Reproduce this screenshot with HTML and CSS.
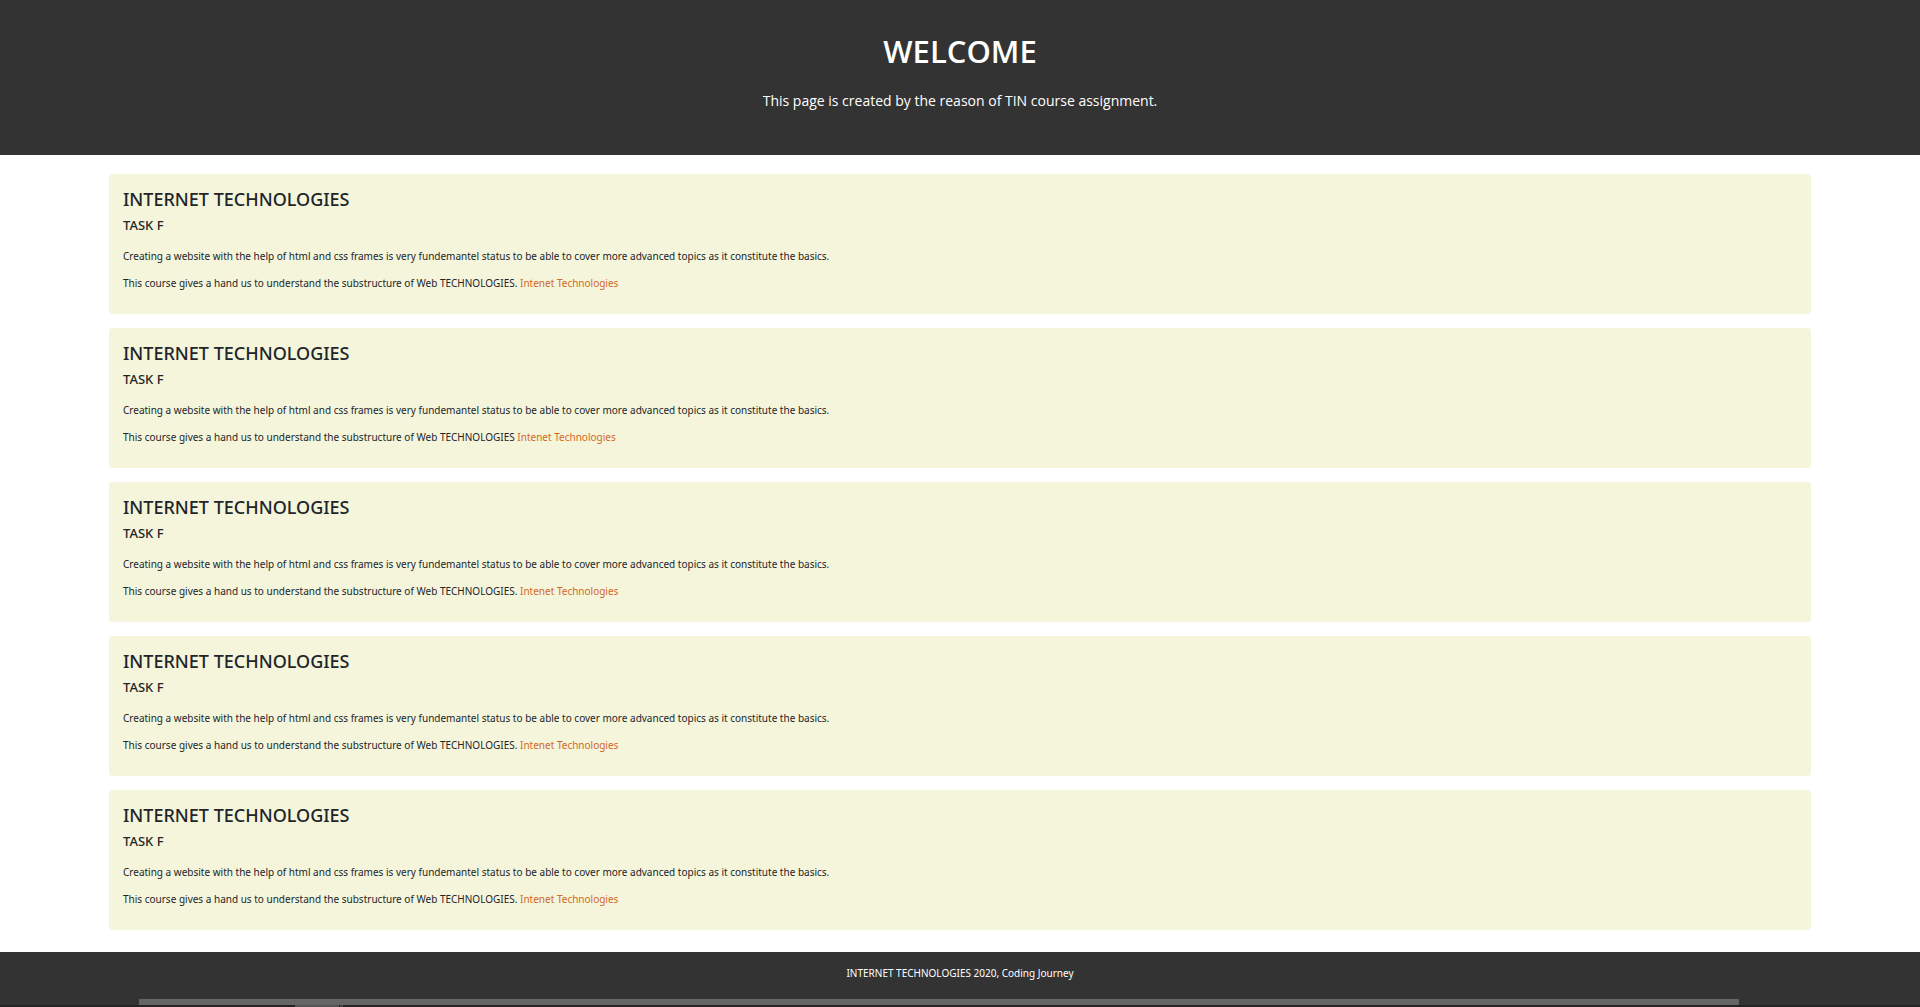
FILE: index.html
```html
<!DOCTYPE html>
<html lang="en">
<head>
  <meta charset="utf-8">
  <title>Internet Technologies</title>
  <link rel="stylesheet" href="styles.css">
</head>
<body>
  <header class="site-header">
    <h1 class="site-title">WELCOME</h1>
    <p class="site-intro">This page is created by the reason of TIN course assignment.</p>
  </header>

  <main class="articles">
    <article class="card">
      <h2 class="card-title">INTERNET TECHNOLOGIES</h2>
      <h3 class="card-subtitle">TASK F</h3>
      <p class="card-text">Creating a website with the help of html and css frames is very fundemantel status to be able to cover more advanced topics as it constitute the basics.</p>
      <p class="card-text">This course gives a hand us to understand the substructure of Web TECHNOLOGIES. <a class="card-link" href="#">Intenet Technologies</a></p>
    </article>
    <article class="card">
      <h2 class="card-title">INTERNET TECHNOLOGIES</h2>
      <h3 class="card-subtitle">TASK F</h3>
      <p class="card-text">Creating a website with the help of html and css frames is very fundemantel status to be able to cover more advanced topics as it constitute the basics.</p>
      <p class="card-text">This course gives a hand us to understand the substructure of Web TECHNOLOGIES <a class="card-link" href="#">Intenet Technologies</a></p>
    </article>
    <article class="card">
      <h2 class="card-title">INTERNET TECHNOLOGIES</h2>
      <h3 class="card-subtitle">TASK F</h3>
      <p class="card-text">Creating a website with the help of html and css frames is very fundemantel status to be able to cover more advanced topics as it constitute the basics.</p>
      <p class="card-text">This course gives a hand us to understand the substructure of Web TECHNOLOGIES. <a class="card-link" href="#">Intenet Technologies</a></p>
    </article>
    <article class="card">
      <h2 class="card-title">INTERNET TECHNOLOGIES</h2>
      <h3 class="card-subtitle">TASK F</h3>
      <p class="card-text">Creating a website with the help of html and css frames is very fundemantel status to be able to cover more advanced topics as it constitute the basics.</p>
      <p class="card-text">This course gives a hand us to understand the substructure of Web TECHNOLOGIES. <a class="card-link" href="#">Intenet Technologies</a></p>
    </article>
    <article class="card">
      <h2 class="card-title">INTERNET TECHNOLOGIES</h2>
      <h3 class="card-subtitle">TASK F</h3>
      <p class="card-text">Creating a website with the help of html and css frames is very fundemantel status to be able to cover more advanced topics as it constitute the basics.</p>
      <p class="card-text">This course gives a hand us to understand the substructure of Web TECHNOLOGIES. <a class="card-link" href="#">Intenet Technologies</a></p>
    </article>
  </main>

  <footer class="site-footer">
    <p class="copyright">INTERNET TECHNOLOGIES 2020, Coding Journey</p>
    <div class="footer-bar"></div>
    <div class="footer-edge"><span class="edge-block"></span><span class="edge-tick"></span></div>
  </footer>
</body>
</html>
```

FILE: styles.css
```css
* {
  box-sizing: border-box;
}

body {
  display: flex;
  flex-direction: column;
  min-height: 100vh;
  margin: 0;
  background: #fff;
  color: #212529;
  font-family: "Segoe UI", "Noto Sans", sans-serif;
}

h1, h2, h3, p {
  margin: 0;
}

.site-header {
  padding: 32px 16px 42px;
  background: #333;
  color: #fff;
  font-family: "Segoe UI", "Open Sans", sans-serif;
  text-align: center;
}

.site-title {
  margin-bottom: 19px;
  font-size: 31px;
  font-weight: 600;
  line-height: 38px;
}

.site-intro {
  font-size: 14px;
  line-height: 24px;
}

.articles {
  display: flex;
  flex-direction: column;
  gap: 14px;
  flex: 1;
  width: 100%;
  padding: 19px 109px 22px;
}

.card {
  padding: 14px 14px 23px;
  border-radius: 4px;
  background: beige;
}

.card-title {
  margin-bottom: 7px;
  font-size: 18px;
  font-weight: 500;
  line-height: 22px;
}

.card-subtitle {
  margin-bottom: 15px;
  font-size: 13px;
  font-weight: 500;
  line-height: 16px;
}

.card-text {
  font-size: 10px;
  line-height: 16px;
}

.card-text + .card-text {
  margin-top: 11px;
}

.card-link {
  color: chocolate;
  text-decoration: none;
}

.site-footer {
  background: #333;
  color: #fff;
  text-align: center;
}

.copyright {
  padding: 13px 16px 18px;
  font-size: 10px;
  line-height: 16px;
}

.footer-bar {
  height: 6px;
  margin: 0 181px 0 139px;
  background: #646567;
}

.footer-edge {
  display: flex;
  gap: 1px;
  height: 2px;
  padding-left: 295px;
  background: #262324;
}

.edge-block {
  width: 44px;
  background: #555;
}

.edge-tick {
  width: 3px;
  background: #484848;
}
```
